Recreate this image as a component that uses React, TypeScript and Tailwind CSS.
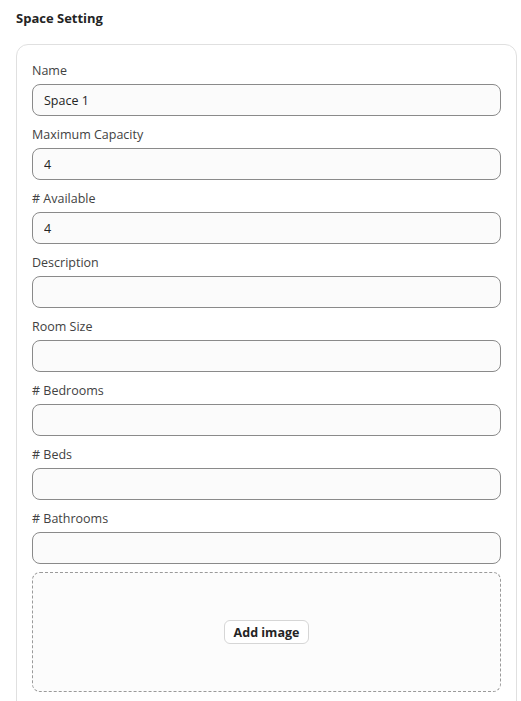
import React from 'react';

const fields: { label: string; value: string }[] = [
  { label: 'Name', value: 'Space 1' },
  { label: 'Maximum Capacity', value: '4' },
  { label: '# Available', value: '4' },
  { label: 'Description', value: '' },
  { label: 'Room Size', value: '' },
  { label: '# Bedrooms', value: '' },
  { label: '# Beds', value: '' },
  { label: '# Bathrooms', value: '' },
];

export default function App() {
  return (
    <div className="min-h-[701px] bg-white pl-4 pt-[9px] text-[13px] text-[#242424] font-['Open_Sans',sans-serif]">
      <h2 className="text-[13px] leading-[18px] font-bold text-[#242424]">Space Setting</h2>
      <div className="mt-[17px] w-[501px] rounded-xl border border-[#e0e0e0] bg-white px-[15px] pt-4 pb-6">
        {fields.map((f) => (
          <div key={f.label} className="mb-[9px]">
            <label className="block pt-px text-[12.5px] leading-[18px] mb-[4px] text-[#424242]">{f.label}</label>
            <input
              defaultValue={f.value}
              className="block h-8 w-full rounded-lg border border-[#8a8a8a] bg-[#fbfbfb] px-[11px] text-[12.5px] text-[#242424] outline-none"
            />
          </div>
        ))}
        <div className="mt-[-1px] flex h-[120px] items-center justify-center rounded-lg border border-dashed border-[#9a9a9a] bg-[#fcfcfc]">
          <button className="h-[24px] rounded-md border border-[#d6d6d6] bg-white px-[9px] pt-px text-[12.5px] font-bold leading-[18px] text-[#242424]">
            Add image
          </button>
        </div>
      </div>
    </div>
  );
}
